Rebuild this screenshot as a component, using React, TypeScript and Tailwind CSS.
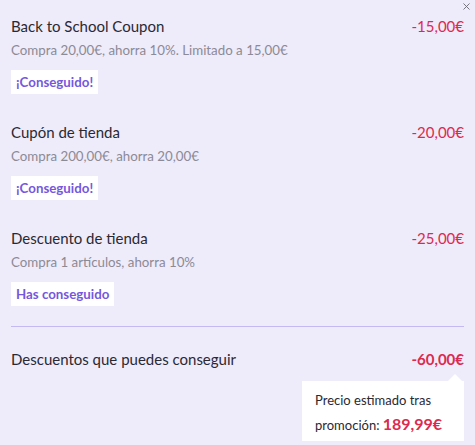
import { X } from "lucide-react";

const coupons = [
  { title: "Back to School Coupon", desc: "Compra 20,00€, ahorra 10%. Limitado a 15,00€", badge: "¡Conseguido!", amount: "-15,00€" },
  { title: "Cupón de tienda", desc: "Compra 200,00€, ahorra 20,00€", badge: "¡Conseguido!", amount: "-20,00€" },
  { title: "Descuento de tienda", desc: "Compra 1 artículos, ahorra 10%", badge: "Has conseguido", amount: "-25,00€" },
];

export default function App() {
  return (
    <div
      className="relative w-[475px] h-[445px] bg-[#eeebfb] px-[11px] pt-[17px] text-[#2a2932] overflow-hidden"
      style={{ fontFamily: "Lato, 'Noto Sans', sans-serif" }}
    >
      {/* close */}
      <button className="absolute right-[3px] top-[1px] text-[#6b6a72]">
        <X size={11} strokeWidth={2} />
      </button>

      {/* coupon list */}
      <div className="flex flex-col gap-[29px]">
        {coupons.map((c) => (
          <div key={c.title} className="flex justify-between">
            <div className="flex flex-col">
              <div className="text-[15px] leading-[18px]">{c.title}</div>
              <div className="text-[13.3px] leading-[16px] text-[#8c8a94] mt-[7px]">{c.desc}</div>
              <div className="mt-[11px]">
                <span className="inline-block bg-white px-[5px] h-[24px] leading-[24px] text-[13.3px] font-bold text-[#7657dd]">
                  {c.badge}
                </span>
              </div>
            </div>
            <div className="text-[15px] leading-[18px] text-[#dc2a4e]">{c.amount}</div>
          </div>
        ))}
      </div>

      {/* divider */}
      <div className="mt-[20px] h-px bg-[#c4b9f2]" />

      {/* total */}
      <div className="mt-[23px] flex justify-between items-center">
        <div className="text-[15px] leading-[18px]">Descuentos que puedes conseguir</div>
        <div className="text-[15px] leading-[18px] font-bold text-[#dc2a4e]">-60,00€</div>
      </div>

      {/* tooltip */}
      <div className="flex justify-end mt-[13px]">
        <div className="relative w-[162px] bg-white px-[13px] pt-[8px] pb-[4px] text-[13px] leading-[23px]">
          <div className="absolute -top-[7px] right-[1px] w-0 h-0 border-l-[8px] border-r-[8px] border-b-[8px] border-l-transparent border-r-transparent border-b-white" />
          <div>Precio estimado tras</div>
          <div>
            promoción: <span className="text-[16px] font-bold text-[#dc2a4e]">189,99€</span>
          </div>
        </div>
      </div>
    </div>
  );
}
